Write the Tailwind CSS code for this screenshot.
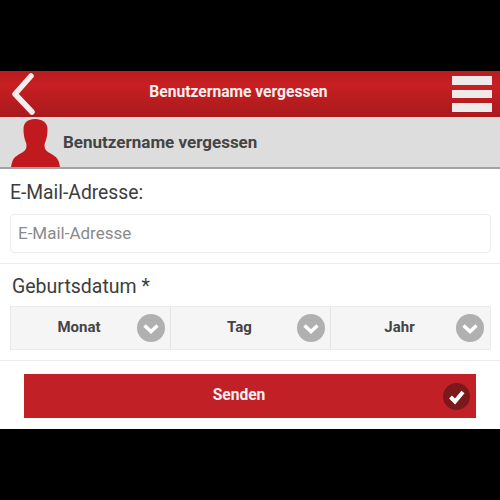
<!DOCTYPE html>
<html lang="de">
  <head>
    <meta charset="UTF-8" />
    <title>Benutzername vergessen</title>
    <script src="https://cdn.jsdelivr.net/npm/@tailwindcss/browser@4"></script>
  </head>
  <body class="bg-black font-['Roboto',sans-serif]">
    <div class="w-[500px] h-[500px] pt-[71px] pb-[71px] bg-black overflow-hidden">
      <div class="h-[358px] bg-white flex flex-col">
        <!-- header -->
        <header class="h-[46px] shrink-0 flex items-center justify-between pl-[11px] pr-2 bg-gradient-to-b from-[#b81c1f] via-[#c81f22] via-30% to-[#a81a1c]">
          <svg class="w-[26px] h-[42px]" viewBox="0 0 26 42" fill="none">
            <path d="M20 3 L4 21 L21 39" stroke="#f6eeee" stroke-width="5.5" stroke-linecap="round" stroke-linejoin="round" />
          </svg>
          <h1 class="mr-[12px] mb-[2px] text-[#fbeeee] font-bold text-[15.6px]">Benutzername vergessen</h1>
          <div class="w-10 flex flex-col gap-[5px]">
            <span class="block h-[9px] bg-[#eeeaea]"></span>
            <span class="block h-[8px] bg-[#eeeaea]"></span>
            <span class="block h-[9px] bg-[#eeeaea]"></span>
          </div>
        </header>
        <!-- sub header -->
        <div class="h-[52px] shrink-0 flex items-end gap-[3px] pl-[11px] bg-[#dddddd] border-b-2 border-[#a3a3a3]">
          <svg class="w-[49px] h-[48px]" viewBox="0 0 49 48" fill="#c01a1e">
            <path d="M24 0 C17 0 12.5 3.5 12.5 10 C12.5 14 13 18 14 21 C14.5 23 15.5 24 15.5 26 C15.5 29 15 31 12 33 C9 35 4 37 2 41 C1 43 0.5 45.5 0 48 L49 48 C48.5 45.5 48 43 47 41 C45 37 40 35 37 33 C34 31 33.5 29 33.5 26 C33.5 24 34.5 23 35 21 C36 18 36.5 14 36.5 10 C36.5 3.5 31 0 24 0 Z" />
          </svg>
          <h2 class="self-center mt-[2px] text-[#444444] font-bold text-[17px]">Benutzername vergessen</h2>
        </div>
        <!-- email -->
        <div class="pl-[10px] pr-[9px] pt-[12px] h-[95px] shrink-0 border-b border-[#ececec]">
          <label class="block text-[19.3px] leading-[24px] text-[#3d3d3d]">E-Mail-Adresse:</label>
          <div class="mt-[9px] h-[39px] flex items-center pl-[7px] border border-[#ececec] rounded-[4px] text-[17px] text-[#8a8a8a]">E-Mail-Adresse</div>
        </div>
        <!-- birth date -->
        <div class="pl-[10px] pr-[9px] pt-[11px] h-[97px] shrink-0 border-b border-[#ececec]">
          <p class="pl-[2px] text-[19.5px] leading-[24px] text-[#3d3d3d]">Geburtsdatum *</p>
          <div class="mt-[7px] h-[44px] grid grid-cols-[160px_160px_159px] bg-[#f5f5f5] border border-[#ebebeb] text-[15px] font-bold text-[#444444]">
            <div class="relative flex items-center justify-center border-r border-[#e4e4e4] pb-[1px] pr-[23px]">
              Monat
              <svg class="absolute right-[5px] top-[7px] w-7 h-7" viewBox="0 0 28 28"><circle cx="14" cy="14" r="14" fill="#b0b0b0" /><path d="M7.5 11.5 L14 17.5 L20.5 11.5" fill="none" stroke="#ffffff" stroke-width="3.5" /></svg>
            </div>
            <div class="relative flex items-center justify-center border-r border-[#e4e4e4] pb-[1px] pr-[22px]">
              Tag
              <svg class="absolute right-[5px] top-[7px] w-7 h-7" viewBox="0 0 28 28"><circle cx="14" cy="14" r="14" fill="#b0b0b0" /><path d="M7.5 11.5 L14 17.5 L20.5 11.5" fill="none" stroke="#ffffff" stroke-width="3.5" /></svg>
            </div>
            <div class="relative flex items-center justify-center pb-[1px] pr-[22px]">
              Jahr
              <svg class="absolute right-[6px] top-[7px] w-7 h-7" viewBox="0 0 28 28"><circle cx="14" cy="14" r="14" fill="#b0b0b0" /><path d="M7.5 11.5 L14 17.5 L20.5 11.5" fill="none" stroke="#ffffff" stroke-width="3.5" /></svg>
            </div>
          </div>
        </div>
        <!-- submit -->
        <div class="px-[24px] pt-[13px]">
          <button class="relative w-full h-[44px] pb-[1px] pr-[22px] bg-[#c02026] text-[#fbeeee] font-bold text-[15.6px]">
            Senden
            <svg class="absolute right-[6px] top-[9px] w-[27px] h-[27px]" viewBox="0 0 27 27"><circle cx="13.5" cy="13.5" r="13.5" fill="#7a181c" /><path d="M7.5 14 L12 18.5 L20 9" fill="none" stroke="#ffffff" stroke-width="4" /></svg>
          </button>
        </div>
      </div>
    </div>
  </body>
</html>
